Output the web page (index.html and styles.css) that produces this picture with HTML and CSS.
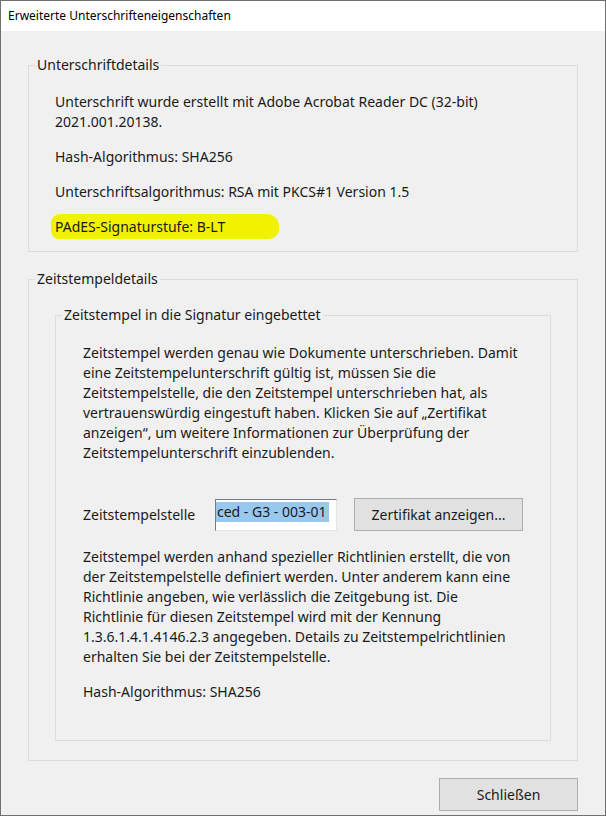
FILE: index.html
```html
<!DOCTYPE html>
<html lang="de">
<head>
    <meta charset="UTF-8">
    <title>Erweiterte Unterschrifteneigenschaften</title>
    <link rel="stylesheet" href="styles.css">
</head>
<body>
    <div class="window">
        <div class="titlebar">Erweiterte Unterschrifteneigenschaften</div>
        <div class="content">
            <fieldset class="group group-sig">
                <legend>Unterschriftdetails</legend>
                <p>Unterschrift wurde erstellt mit Adobe Acrobat Reader DC (32-bit)<br>2021.001.20138.</p>
                <p>Hash-Algorithmus: SHA256</p>
                <p>Unterschriftsalgorithmus: RSA mit PKCS#1 Version 1.5</p>
                <p><span class="marker">PAdES-Signaturstufe: B-LT</span></p>
            </fieldset>

            <fieldset class="group group-ts">
                <legend>Zeitstempeldetails</legend>
                <fieldset class="group inner">
                    <legend>Zeitstempel in die Signatur eingebettet</legend>
                    <p>Zeitstempel werden genau wie Dokumente unterschrieben. Damit<br>eine Zeitstempelunterschrift gültig ist, müssen Sie die<br>Zeitstempelstelle, die den Zeitstempel unterschrieben hat, als<br>vertrauenswürdig eingestuft haben. Klicken Sie auf „Zertifikat<br>anzeigen“, um weitere Informationen zur Überprüfung der<br>Zeitstempelunterschrift einzublenden.</p>
                    <div class="tsa-row">
                        <span class="tsa-label">Zeitstempelstelle</span>
                        <div class="textbox"><span class="selected">ced - G3 - 003-01</span></div>
                        <button class="btn btn-cert">Zertifikat anzeigen...</button>
                    </div>
                    <p>Zeitstempel werden anhand spezieller Richtlinien erstellt, die von<br>der Zeitstempelstelle definiert werden. Unter anderem kann eine<br>Richtlinie angeben, wie verlässlich die Zeitgebung ist. Die<br>Richtlinie für diesen Zeitstempel wird mit der Kennung<br>1.3.6.1.4.1.4146.2.3 angegeben. Details zu Zeitstempelrichtlinien<br>erhalten Sie bei der Zeitstempelstelle.</p>
                    <p>Hash-Algorithmus: SHA256</p>
                </fieldset>
            </fieldset>

            <div class="footer">
                <button class="btn btn-close">Schließen</button>
            </div>
        </div>
    </div>
</body>
</html>
```

FILE: styles.css
```css
html, body {
    margin: 0;
    padding: 0;
}
body {
    font-family: "Segoe UI", "Noto Sans", "Open Sans", sans-serif;
    color: #1a1a1a;
    background: #f0f0f0;
}
.window {
    width: 606px;
    height: 816px;
    box-sizing: border-box;
    border: 1px solid #707070;
    background: #f0f0f0;
    display: flex;
    flex-direction: column;
}
.titlebar {
    height: 30px;
    line-height: 30px;
    background: #ffffff;
    font-size: 12px;
    padding-left: 7px;
    color: #000;
}
.content {
    flex: 1;
    padding: 24px 27px 0 27px;
    display: flex;
    flex-direction: column;
}
.group {
    margin: 0;
    border: 1px solid #dcdcdc;
    padding: 0 0 0 26px;
    font-size: 14px;
}
.group legend {
    padding: 0 2px;
    margin-left: -20px;
    font-size: 14px;
    line-height: 20px;
}
.group p {
    margin: 0;
    line-height: 20px;
}
.group-sig {
    height: 197px;
    box-sizing: border-box;
    padding-top: 17px;
}
.group-sig p {
    margin-bottom: 15px;
}
.marker {
    background: #f0f200;
    border-radius: 9px 12px 10px 8px;
    padding: 3px 54px 3px 4px;
    margin-left: -4px;
}
.group-ts {
    margin-top: 17px;
    height: 492px;
    box-sizing: border-box;
    padding: 16px 26px 0 26px;
}
.inner {
    height: 436px;
    box-sizing: border-box;
    padding: 18px 0 0 27px;
}
.inner legend {
    margin-left: -21px;
}
.tsa-row {
    display: flex;
    align-items: center;
    margin: 35px 0 16px 0;
}
.tsa-label {
    width: 132px;
}
.textbox {
    width: 122px;
    height: 32px;
    box-sizing: border-box;
    background: #ffffff;
    border: 1px solid #7a7a7a;
    border-right-color: #e3e3e3;
    border-bottom-color: #e3e3e3;
    padding: 2px 2px 0 0;
    overflow: hidden;
    white-space: nowrap;
}
.selected {
    display: inline-block;
    background: #99c8ef;
    line-height: 20px;
    font-size: 14px;
    padding: 0 2px 0 1px;
}
.btn {
    font-family: inherit;
    font-size: 14px;
    color: #1a1a1a;
    background: #e1e1e1;
    border: 1px solid #adadad;
    border-radius: 0;
    padding: 0;
    height: 33px;
}
.btn-cert {
    margin-left: 17px;
    width: 169px;
}
.inner p + p {
    margin-top: 15px;
}
.footer {
    display: flex;
    justify-content: flex-end;
    margin-top: 17px;
}
.btn-close {
    width: 139px;
    height: 33px;
}
```
